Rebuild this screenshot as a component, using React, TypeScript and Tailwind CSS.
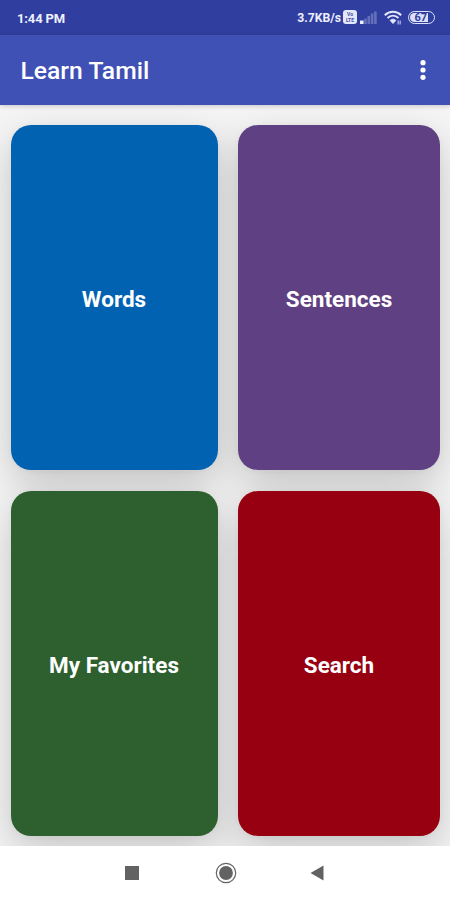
import type { ReactNode } from 'react';

interface Category {
  title: string;
  color: string;
}

const categories: Category[] = [
  { title: 'Words', color: 'bg-[#0062b1]' },
  { title: 'Sentences', color: 'bg-[#5f4082]' },
  { title: 'My Favorites', color: 'bg-[#2d602e]' },
  { title: 'Search', color: 'bg-[#960010]' },
];

function SignalIcon() {
  return (
    <svg width="17" height="13" viewBox="0 0 17 13" className="ml-[3px]">
      <rect x="0" y="9.5" width="3.6" height="3.5" rx="0.5" fill="#eef0ff" />
      <rect x="4.2" y="7.5" width="2.6" height="5.5" fill="#6570ba" />
      <rect x="7.5" y="5" width="2.6" height="8" fill="#6570ba" />
      <rect x="10.8" y="2.5" width="2.6" height="10.5" fill="#6570ba" />
      <rect x="14.1" y="0.5" width="2.6" height="12.5" fill="#6570ba" />
    </svg>
  );
}

function WifiIcon() {
  return (
    <svg width="19" height="15" viewBox="0 0 19 15" fill="none" stroke="#e4e8fc" className="ml-[7px]">
      <path d="M0.8 5.2C5.5 0.7 12.5 0.7 17.2 5.2" strokeWidth="2" />
      <path d="M3.5 8C6.8 4.9 11.2 4.9 14.5 8" strokeWidth="1.9" />
      <path d="M6.1 10.4C7.9 8.7 10.1 8.7 11.9 10.4L9 13.6Z" fill="#e4e8fc" strokeWidth="0.8" />
      <path d="M14.2 10.5V14.5M16.2 10.5V14.5" strokeWidth="1.3" stroke="#adb7e5" />
    </svg>
  );
}

function StatusBar() {
  return (
    <div className="flex h-[35px] shrink-0 items-center justify-between bg-[#303e9f] pr-[15px] pl-[17px] text-[#eef0ff]">
      <span className="pt-[2px] text-[13px] font-bold tracking-[-0.15px]">1:44 PM</span>
      <div className="flex items-center">
        <span className="pt-px text-[12.2px] font-bold">3.7KB/s</span>
        <div className="ml-[2px] flex h-[14px] w-[14px] flex-col items-center justify-center rounded-[3px] bg-[#e4e8fb] text-[5px] leading-[6px] font-bold text-[#4551a5]">
          <span>Vo</span>
          <span>LTE</span>
        </div>
        <SignalIcon />
        <WifiIcon />
        <div className="ml-[5px] flex h-[13px] w-[27px] items-center rounded-full border-[1.5px] border-[#dce1fa] p-px">
          <div className="flex h-full w-[18px] items-center justify-end rounded-l-full bg-[#dce1fa] pr-px text-[11px] leading-none font-bold text-[#303e9f]">
            67
          </div>
        </div>
      </div>
    </div>
  );
}

function AppBar() {
  return (
    <header className="relative z-10 flex h-[69.5px] shrink-0 items-center justify-between bg-[#3f51b5] pr-[24px] pl-[20.5px] shadow-[0_1px_5px_rgba(0,0,0,0.2)]">
      <h1 className="pt-[2px] text-[24.7px] font-medium text-white">Learn Tamil</h1>
      <svg width="6" height="20" viewBox="0 0 6 20" fill="#fff">
        <circle cx="3" cy="2.7" r="2.6" />
        <circle cx="3" cy="10" r="2.6" />
        <circle cx="3" cy="17.3" r="2.6" />
      </svg>
    </header>
  );
}

function CategoryCard({ title, color }: Category) {
  return (
    <div className="rounded-[20px] shadow-[0_14px_40px_rgba(0,0,0,0.2),0_1px_6px_rgba(0,0,0,0.04)]">
      <button
        className={`relative flex h-full w-full items-center justify-center rounded-[20px] pt-[5px] text-[22.5px] font-bold text-white ${color}`}
      >
        {title}
      </button>
    </div>
  );
}

function NavigationBar({ children }: { children: ReactNode }) {
  return (
    <nav className="relative z-10 flex h-[54px] shrink-0 items-center bg-white pl-[125px]">
      {children}
    </nav>
  );
}

export default function App() {
  return (
    <div className="flex h-[900px] w-[450px] flex-col overflow-hidden bg-[#f5f5f5] font-['Roboto',sans-serif]">
      <StatusBar />
      <AppBar />

      <main className="grid min-h-0 flex-1 grid-cols-[207px_202px] grid-rows-[344.5px_345px] gap-x-[20.5px] gap-y-[21px] pt-[20.5px] pl-[10.5px]">
        {categories.map((category) => (
          <CategoryCard key={category.title} {...category} />
        ))}
      </main>

      {/* System navigation */}
      <NavigationBar>
        <div className="h-[14px] w-[14px] bg-[#626262]" />
        <svg width="22" height="22" viewBox="0 0 22 22" className="ml-[75.5px]">
          <circle cx="11" cy="11" r="9.7" fill="none" stroke="#646464" strokeWidth="1.2" />
          <circle cx="11" cy="11" r="6.9" fill="#626262" />
        </svg>
        <svg width="14" height="16" viewBox="0 0 14 16" className="ml-[73px]">
          <path d="M0.5 8L13.5 0.5V15.5Z" fill="#626262" />
        </svg>
      </NavigationBar>
    </div>
  );
}
